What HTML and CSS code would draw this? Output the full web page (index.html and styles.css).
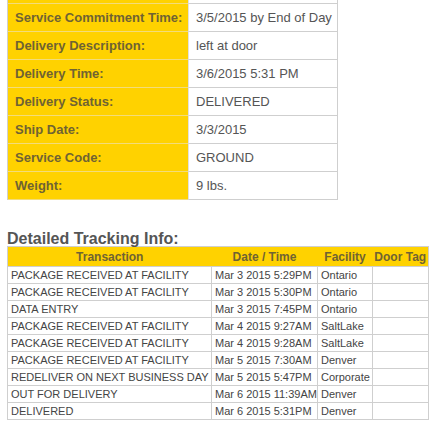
FILE: index.html
```html
<!DOCTYPE html>
<html>
<head>
<meta charset="utf-8">
<link rel="stylesheet" href="styles.css">
</head>
<body>
<div class="page">
  <table class="info">
    <tr><th class="lbl">&nbsp;</th><td class="val">&nbsp;</td></tr>
    <tr><th class="lbl">Service Commitment Time:</th><td class="val">3/5/2015 by End of Day</td></tr>
    <tr><th class="lbl">Delivery Description:</th><td class="val">left at door</td></tr>
    <tr><th class="lbl">Delivery Time:</th><td class="val">3/6/2015 5:31 PM</td></tr>
    <tr><th class="lbl">Delivery Status:</th><td class="val">DELIVERED</td></tr>
    <tr><th class="lbl">Ship Date:</th><td class="val">3/3/2015</td></tr>
    <tr><th class="lbl">Service Code:</th><td class="val">GROUND</td></tr>
    <tr><th class="lbl">Weight:</th><td class="val">9 lbs.</td></tr>
  </table>

  <h2 class="heading">Detailed Tracking Info:</h2>
  <table class="track">
    <colgroup>
      <col class="c1"><col class="c2"><col class="c3"><col class="c4">
    </colgroup>
    <thead>
      <tr><th>Transaction</th><th>Date / Time</th><th>Facility</th><th>Door Tag</th></tr>
    </thead>
    <tbody>
      <tr><td>PACKAGE RECEIVED AT FACILITY</td><td>Mar 3 2015 5:29PM</td><td>Ontario</td><td></td></tr>
      <tr><td>PACKAGE RECEIVED AT FACILITY</td><td>Mar 3 2015 5:30PM</td><td>Ontario</td><td></td></tr>
      <tr><td>DATA ENTRY</td><td>Mar 3 2015 7:45PM</td><td>Ontario</td><td></td></tr>
      <tr><td>PACKAGE RECEIVED AT FACILITY</td><td>Mar 4 2015 9:27AM</td><td>SaltLake</td><td></td></tr>
      <tr><td>PACKAGE RECEIVED AT FACILITY</td><td>Mar 4 2015 9:28AM</td><td>SaltLake</td><td></td></tr>
      <tr><td>PACKAGE RECEIVED AT FACILITY</td><td>Mar 5 2015 7:30AM</td><td>Denver</td><td></td></tr>
      <tr><td>REDELIVER ON NEXT BUSINESS DAY</td><td>Mar 5 2015 5:47PM</td><td>Corporate</td><td></td></tr>
      <tr><td>OUT FOR DELIVERY</td><td>Mar 6 2015 11:39AM</td><td>Denver</td><td></td></tr>
      <tr><td>DELIVERED</td><td>Mar 6 2015 5:31PM</td><td>Denver</td><td></td></tr>
    </tbody>
  </table>
</div>
</body>
</html>
```

FILE: styles.css
```css
html, body {
  margin: 0;
  padding: 0;
  background: #fff;
}
body {
  font-family: "Liberation Sans", Arial, Helvetica, sans-serif;
  overflow: hidden;
}
.page {
  padding-left: 7px;
}
.info {
  border-collapse: separate;
  border-spacing: 0;
  margin-top: -24px;
  width: 331px;
  border-left: 1px solid #cfcfcf;
}
.info th, .info td {
  height: 27px;
  padding: 0 0 0 7px;
  text-align: left;
  vertical-align: middle;
  font-size: 13px;
  white-space: nowrap;
}
.info .lbl {
  width: 173px;
  background: #ffd200;
  color: #6f6333;
  font-weight: bold;
  border-bottom: 1px solid #f3dc7a;
}
.info .val {
  background: #fff;
  color: #555;
  border-bottom: 1px solid #cfcfcf;
  border-right: 1px solid #cfcfcf;
  border-left: 1px solid #e0e0e0;
}
.heading {
  margin: 32px 0 0 0;
  font-size: 16px;
  line-height: 14px;
  font-weight: bold;
  color: #555;
  height: 14px;
}
.track {
  margin-top: 0;
  border-collapse: collapse;
  width: 421px;
  table-layout: fixed;
  border: 1px solid #cfcfcf;
}
.track .c1 { width: 204px; }
.track .c2 { width: 106px; }
.track .c3 { width: 55px; }
.track .c4 { width: 56px; }
.track th {
  background: #ffd200;
  color: #6f6333;
  font-size: 12px;
  font-weight: bold;
  height: 19px;
  padding: 0;
  text-align: center;
  white-space: nowrap;
  border: none;
}
.track td {
  height: 16px;
  padding: 0 0 0 3px;
  font-size: 11px;
  color: #444;
  border: 1px solid #cfcfcf;
  white-space: nowrap;
  overflow: hidden;
}
```
